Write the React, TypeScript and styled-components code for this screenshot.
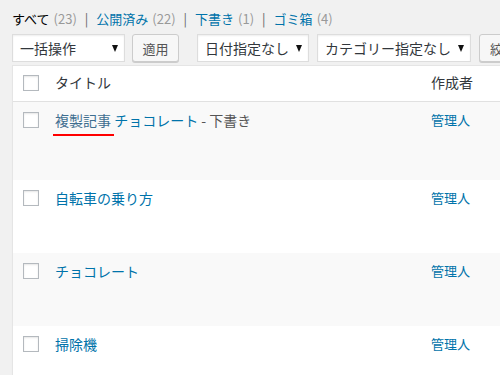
import React from "react";
import styled, { createGlobalStyle } from "styled-components";

const Global = createGlobalStyle`
  html, body { margin: 0; padding: 0; background: #f1f1f1; overflow: hidden; }
  body { font-family: "Noto Sans CJK JP", "Noto Sans", sans-serif; color: #444; }
`;

const Page = styled.div`
  width: 500px;
  height: 375px;
  overflow: hidden;
  padding-left: 12px;
  box-sizing: border-box;
`;

const Nav = styled.div`
  padding-top: 10px;
  font-size: 13px;
  line-height: 18px;
  display: flex;
  align-items: center;
  white-space: nowrap;
`;

const NavItem = styled.span<{ $current?: boolean }>`
  color: ${(p) => (p.$current ? "#000" : "#0073aa")};
`;

const Count = styled.span`
  color: #999;
  margin-left: 4px;
`;

const Sep = styled.span`
  color: #666;
  margin: 0 8px;
`;

const Toolbar = styled.div`
  margin-top: 6px;
  display: flex;
  align-items: center;
  height: 28px;
  white-space: nowrap;
`;

const Select = styled.div<{ $w: number; $gap: number }>`
  width: ${(p) => p.$w}px;
  margin-right: ${(p) => p.$gap}px;
  height: 28px;
  box-sizing: border-box;
  background: #fff;
  border: 1px solid #ddd;
  box-shadow: inset 0 1px 2px rgba(0, 0, 0, 0.07);
  display: flex;
  align-items: center;
  justify-content: space-between;
  padding: 0 6px 0 7px;
  font-size: 14px;
  color: #32373c;
  flex-shrink: 0;
`;

const Caret = styled.span`
  width: 0;
  height: 0;
  border-left: 3.5px solid transparent;
  border-right: 3.5px solid transparent;
  border-top: 7px solid #111;
`;

const Button = styled.div<{ $gap: number; $w?: number }>`
  height: 28px;
  box-sizing: border-box;
  ${(p) => (p.$w ? `width: ${p.$w}px;` : "")}
  margin-right: ${(p) => p.$gap}px;
  padding: 0 10px;
  background: #f7f7f7;
  border: 1px solid #ccc;
  border-radius: 3px;
  box-shadow: 0 1px 0 #ccc;
  display: flex;
  align-items: center;
  justify-content: center;
  font-size: 13px;
  color: #555;
  flex-shrink: 0;
`;

const Table = styled.div`
  margin-top: 3px;
  width: 560px;
  background: #fff;
  border: 1px solid #e5e5e5;
  box-shadow: 0 1px 1px rgba(0, 0, 0, 0.04);
`;

const HeadRow = styled.div`
  display: grid;
  grid-template-columns: 32px 376px 1fr;
  padding-left: 10px;
  height: 35px;
  border-bottom: 1px solid #e1e1e1;
`;

const Row = styled.div<{ $alt?: boolean; $h: number }>`
  display: grid;
  grid-template-columns: 32px 376px 1fr;
  padding-left: 10px;
  height: ${(p) => p.$h}px;
  background: ${(p) => (p.$alt ? "#f9f9f9" : "#fff")};
`;

const Check = styled.span<{ $top: number }>`
  display: block;
  width: 16px;
  height: 16px;
  box-sizing: border-box;
  border: 1px solid #b4b9be;
  background: #fff;
  box-shadow: inset 0 1px 2px rgba(0, 0, 0, 0.1);
  margin-top: ${(p) => p.$top}px;
`;

const HeadText = styled.div`
  padding-top: 6px;
  font-size: 14px;
  line-height: 20px;
  color: #32373c;
`;

const TitleCell = styled.div`
  padding-top: 8px;
  font-size: 14px;
  line-height: 20px;
  color: #0073aa;
  white-space: nowrap;
`;

const Marked = styled.span`
  position: relative;
  color: #3e6e90;
  &::after {
    content: "";
    position: absolute;
    left: -2px;
    right: -3px;
    bottom: -6px;
    height: 2px;
    background: #f00;
  }
`;

const State = styled.span`
  color: #555;
`;

const AuthorCell = styled.div`
  padding-top: 8px;
  font-size: 13px;
  line-height: 20px;
  color: #0073aa;
`;

const posts = [
  { title: "自転車の乗り方", h: 73 },
  { title: "チョコレート", h: 73 },
  { title: "掃除機", h: 73 },
];

export default function App() {
  return (
    <>
      <Global />
      <Page>
        <Nav>
          <NavItem $current>すべて</NavItem>
          <Count>(23)</Count>
          <Sep>|</Sep>
          <NavItem>公開済み</NavItem>
          <Count>(22)</Count>
          <Sep>|</Sep>
          <NavItem>下書き</NavItem>
          <Count>(1)</Count>
          <Sep>|</Sep>
          <NavItem>ゴミ箱</NavItem>
          <Count>(4)</Count>
        </Nav>
        <Toolbar>
          <Select $w={113} $gap={7}>
            一括操作
            <Caret />
          </Select>
          <Button $gap={18} $w={47}>適用</Button>
          <Select $w={112} $gap={8}>
            日付指定なし
            <Caret />
          </Select>
          <Select $w={154} $gap={8}>
            カテゴリー指定なし
            <Caret />
          </Select>
          <Button $gap={0}>絞り込み検索</Button>
        </Toolbar>
        <Table>
          <HeadRow>
            <Check $top={9} />
            <HeadText>タイトル</HeadText>
            <HeadText>作成者</HeadText>
          </HeadRow>
          <Row $alt $h={78}>
            <Check $top={10} />
            <TitleCell>
              <Marked>複製記事</Marked> チョコレート<State> - 下書き</State>
            </TitleCell>
            <AuthorCell>管理人</AuthorCell>
          </Row>
          {posts.map((p, i) => (
            <Row key={p.title} $alt={i % 2 === 1} $h={p.h}>
              <Check $top={10} />
              <TitleCell>{p.title}</TitleCell>
              <AuthorCell>管理人</AuthorCell>
            </Row>
          ))}
        </Table>
      </Page>
    </>
  );
}
